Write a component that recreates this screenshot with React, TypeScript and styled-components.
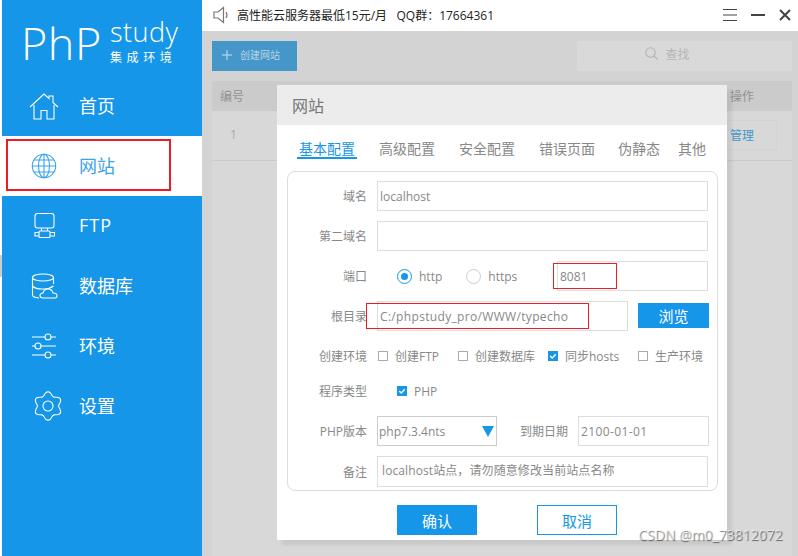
import * as React from 'react';
import styled, { createGlobalStyle } from 'styled-components';

const blue = '#1696e8';
const fontStack = `'Open Sans', 'Noto Sans CJK SC', sans-serif`;

const navItems = [
  { label: '首页', icon: 'home' },
  { label: '网站', icon: 'globe' },
  { label: 'FTP', icon: 'ftp' },
  { label: '数据库', icon: 'db' },
  { label: '环境', icon: 'env' },
  { label: '设置', icon: 'gear' },
];

const tabs = ['基本配置', '高级配置', '安全配置', '错误页面', '伪静态', '其他'];

function gearPath() {
  const pts: string[] = [];
  for (let i = 0; i < 72; i++) {
    const a = (i / 72) * Math.PI * 2;
    const r = 12.4 + 1.8 * Math.cos(6 * a);
    const x = 22 + r * Math.sin(a);
    const y = 18 - r * Math.cos(a);
    pts.push(`${x.toFixed(2)} ${y.toFixed(2)}`);
  }
  return `M${pts.join('L')}Z`;
}

function NavIcon({ name }: { name: string }) {
  return (
    <IconSvg viewBox="0 0 36 36" fill="none" stroke="currentColor" strokeWidth="1.1">
      {name === 'home' && (
        <>
          <path d="M4 19 L18 6 L23 10.5 V8 H27 V14.5 L32 19" />
          <path d="M8 17 V31 H15 V22.5 H21 V31 H28 V17" />
        </>
      )}
      {name === 'globe' && (
        <>
          <circle cx="18" cy="18" r="11.7" />
          <ellipse cx="18" cy="18" rx="5.5" ry="11.7" />
          <path d="M18 6.3 V29.7 M6.3 18 H29.7 M8 12 H28 M8 24 H28" />
        </>
      )}
      {name === 'ftp' && (
        <>
          <rect x="9" y="5.5" width="19" height="14.5" rx="2.5" />
          <path d="M15.5 20 V23 M21.5 20 V23" />
          <rect x="13" y="23" width="11" height="6.5" rx="1" />
          <path d="M13 24.5 H9 V28 H13 M24 24.5 H28.5 V28 H24" />
        </>
      )}
      {name === 'db' && (
        <>
          <ellipse cx="17" cy="9.5" rx="10.5" ry="3.5" />
          <path d="M6.5 9.5 V27 Q6.5 29.5 13 30 M27.5 9.5 V16 M6.5 18 Q10 21.5 18 21 Q24 20.8 27.5 18" />
          <path d="M17 30 Q14 30 14 27.5 Q14 25.2 17 25 Q18 21 22 21 Q26 21 27 25 Q31 25 31 27.8 Q31 30 29 30 Z" />
        </>
      )}
      {name === 'env' && (
        <>
          <path d="M6 9 H19 M25 9 H30 M6 18 H9 M15 18 H30 M6 27 H19 M25 27 H30" />
          <circle cx="22" cy="9" r="3" />
          <circle cx="12" cy="18" r="3" />
          <circle cx="22" cy="27" r="3" />
        </>
      )}
      {name === 'gear' && (
        <>
          <path d={gearPath()} />
          <circle cx="22" cy="18" r="5" />
        </>
      )}
    </IconSvg>
  );
}

function Check({ on }: { on?: boolean }) {
  return (
    <CheckBox $on={on}>
      {on && (
        <svg viewBox="0 0 10 10" width="10" height="10" fill="none" stroke="#fff" strokeWidth="1.4">
          <path d="M2.2 5 L4.2 7 L7.8 3.2" />
        </svg>
      )}
    </CheckBox>
  );
}

export default function App() {
  return (
    <Shell>
      <GlobalStyle />
      <Sidebar>
        <Logo>
          <LogoMark>PhP</LogoMark>
          <LogoSide>
            <LogoStudy>study</LogoStudy>
            <LogoSub>集成环境</LogoSub>
          </LogoSide>
        </Logo>
        {navItems.map((item) => (
          <NavItem key={item.label} $active={item.icon === 'globe'}>
            <NavIcon name={item.icon} />
            <NavLabel $latin={item.icon === 'ftp'}>{item.label}</NavLabel>
          </NavItem>
        ))}
      </Sidebar>

      <Main>
        <TopBar>
          <svg width="16" height="18" viewBox="0 0 16 18" fill="none" stroke="#777" strokeWidth="1.2">
            <path d="M1 6 H5 L10.5 1.5 V16.5 L5 12 H1 Z" />
            <path d="M13 6 Q15 9 13 12" />
          </svg>
          <Notice>高性能云服务器最低15元/月&nbsp;&nbsp;&nbsp;QQ群：17664361</Notice>
          <WindowControls>
            <svg width="14" height="12" viewBox="0 0 14 12" stroke="#444" strokeWidth="1">
              <path d="M0 .5 H14 M0 6 H14 M0 11.5 H14" />
            </svg>
            <svg width="14" height="12" viewBox="0 0 14 12" stroke="#444" strokeWidth="2">
              <path d="M0 6 H14" />
            </svg>
            <svg width="12" height="12" viewBox="0 0 12 12" stroke="#444" strokeWidth="2">
              <path d="M1 1 L11 11 M11 1 L1 11" />
            </svg>
          </WindowControls>
        </TopBar>

        <Content>
          <Toolbar>
            <CreateButton>
              <svg width="10" height="10" viewBox="0 0 10 10" stroke="#cfe0ec" strokeWidth="1">
                <path d="M5 0 V10 M0 5 H10" />
              </svg>
              创建网站
            </CreateButton>
            <SearchBox>
              <svg width="13" height="13" viewBox="0 0 13 13" fill="none" stroke="#b4b4b4" strokeWidth="1.1">
                <circle cx="5.5" cy="5.5" r="4.7" />
                <path d="M9 9 L12.5 12.5" />
              </svg>
              查找
            </SearchBox>
          </Toolbar>
          <Table>
            <TableHead>
              <span>编号</span>
              <ActionCell>操作</ActionCell>
            </TableHead>
            <TableRow>
              <RowIndex>1</RowIndex>
              <ManageButton>管理</ManageButton>
            </TableRow>
          </Table>

          <Modal>
            <ModalTitle>网站</ModalTitle>
            <TabBar>
              {tabs.map((t, i) => (
                <Tab key={t} $active={i === 0}>
                  {t}
                </Tab>
              ))}
            </TabBar>
            <Panel>
              <FormRow>
                <Label>域名</Label>
                <Field $grow>localhost</Field>
              </FormRow>
              <FormRow>
                <Label>第二域名</Label>
                <Field $grow />
              </FormRow>
              <FormRow>
                <Label>端口</Label>
                <RadioItem>
                  <Radio $on />
                  http
                </RadioItem>
                <RadioItem>
                  <Radio />
                  https
                </RadioItem>
                <Field $width={151} $push>
                  8081
                </Field>
              </FormRow>
              <FormRow>
                <Label>根目录</Label>
                <PathField $width={251}>C:/phpstudy_pro/WWW/typecho</PathField>
                <BrowseButton>浏览</BrowseButton>
              </FormRow>
              <FormRow>
                <Label>创建环境</Label>
                <CheckItem $width={80}>
                  <Check />
                  创建FTP
                </CheckItem>
                <CheckItem $width={90}>
                  <Check />
                  创建数据库
                </CheckItem>
                <CheckItem $width={90}>
                  <Check on />
                  同步hosts
                </CheckItem>
                <CheckItem $width={70}>
                  <Check />
                  生产环境
                </CheckItem>
              </FormRow>
              <TightRow>
                <Label>程序类型</Label>
                <PhpCheck>
                  <Check on />
                  PHP
                </PhpCheck>
              </TightRow>
              <FormRow>
                <Label>PHP版本</Label>
                <SelectBox>
                  php7.3.4nts
                  <SelectArrow />
                </SelectBox>
                <DateLabel>到期日期</DateLabel>
                <DateField $width={131}>2100-01-01</DateField>
              </FormRow>
              <NoteRow>
                <Label>备注</Label>
                <NoteField>localhost站点，请勿随意修改当前站点名称</NoteField>
              </NoteRow>
            </Panel>
            <ModalFooter>
              <ConfirmButton>确认</ConfirmButton>
              <CancelButton>取消</CancelButton>
            </ModalFooter>
          </Modal>
        </Content>
      </Main>

      <Annotation $left={6} $top={139} $w={165} $h={52} $thick />
      <Annotation $left={553} $top={263} $w={64} $h={26} />
      <Annotation $left={366} $top={303} $w={223} $h={26} />
      <Watermark>CSDN @m0_73812072</Watermark>
    </Shell>
  );
}

const GlobalStyle = createGlobalStyle`
  html, body {
    margin: 0;
    width: 798px;
    height: 556px;
    overflow: hidden;
    background: #fff;
    font-family: ${fontStack};
  }
  * {
    box-sizing: border-box;
  }
`;

const Shell = styled.div`
  position: relative;
  display: flex;
  width: 798px;
  height: 556px;
  padding-left: 2px;
  &::before {
    content: '';
    position: absolute;
    left: 0;
    top: 255px;
    width: 2px;
    height: 22px;
    background: #ccc;
  }
`;

const Sidebar = styled.aside`
  width: 200px;
  flex: none;
  background: ${blue};
`;

const Logo = styled.div`
  display: flex;
  height: 76px;
  padding: 12px 0 0 19px;
  color: #fff;
`;

const LogoMark = styled.div`
  width: 89px;
  font-size: 45px;
  font-weight: 300;
  line-height: 62px;
  letter-spacing: 0.5px;
`;

const LogoSide = styled.div`
  display: flex;
  flex-direction: column;
  padding-top: 2px;
`;

const LogoStudy = styled.div`
  font-size: 27px;
  font-weight: 300;
  line-height: 36px;
  letter-spacing: 0.5px;
`;

const LogoSub = styled.div`
  font-size: 12px;
  line-height: 16px;
  letter-spacing: 4.6px;
  white-space: nowrap;
`;

const NavItem = styled.div<{ $active?: boolean }>`
  display: flex;
  align-items: center;
  height: 60px;
  padding-left: 24px;
  gap: 17px;
  font-size: 18px;
  color: ${(p) => (p.$active ? '#3ba3ea' : '#fff')};
  background: ${(p) => (p.$active ? '#fff' : 'transparent')};
`;

const NavLabel = styled.span<{ $latin?: boolean }>`
  margin-top: -2px;
  letter-spacing: ${(p) => (p.$latin ? '1px' : '0')};
`;

const IconSvg = styled.svg`
  width: 36px;
  height: 36px;
  flex: none;
`;

const Main = styled.main`
  flex: 1;
  display: flex;
  flex-direction: column;
  min-width: 0;
`;

const TopBar = styled.header`
  display: flex;
  align-items: center;
  height: 31px;
  padding: 0 7px 1px 11px;
  background: #fff;
`;

const Notice = styled.div`
  margin-left: 8px;
  font-size: 12px;
  color: #222;
`;

const WindowControls = styled.div`
  display: flex;
  align-items: center;
  margin-left: auto;
  gap: 14px;
`;

const Content = styled.div`
  position: relative;
  flex: 1;
  display: flex;
  flex-direction: column;
  gap: 10px;
  padding: 10px 6px 0 10px;
  background: #d3d3d3;
`;

const Toolbar = styled.div`
  display: flex;
  justify-content: space-between;
  height: 30px;
`;

const CreateButton = styled.div`
  display: flex;
  align-items: center;
  gap: 8px;
  width: 85px;
  padding: 0 0 3px 10px;
  background: #4596c9;
  color: #bcd5e6;
  font-size: 10px;
`;

const SearchBox = styled.div`
  display: flex;
  align-items: center;
  justify-content: center;
  gap: 7px;
  width: 215px;
  padding: 0 34px 5px 0;
  background: #d9d9d9;
  color: #b5b5b5;
  font-size: 12px;
`;

const Table = styled.div`
  flex: 1;
  background: #d8d8d8;
`;

const TableHead = styled.div`
  display: flex;
  align-items: center;
  justify-content: space-between;
  height: 30px;
  padding-left: 8px;
  background: #cbcbcb;
  color: #929292;
  font-size: 12px;
`;

const ActionCell = styled.span`
  width: 62px;
`;

const TableRow = styled.div`
  display: flex;
  align-items: center;
  justify-content: space-between;
  height: 50px;
  padding: 0 15px 2px 18px;
  border-bottom: 1px solid #cacaca;
`;

const RowIndex = styled.span`
  color: #a3acb3;
  font-size: 12px;
`;

const ManageButton = styled.div`
  display: flex;
  align-items: center;
  justify-content: center;
  width: 70px;
  height: 30px;
  border: 1px solid #c7d6e0;
  color: #4596c9;
  font-size: 12px;
`;

const Modal = styled.section`
  position: absolute;
  left: 75px;
  top: 54px;
  display: flex;
  flex-direction: column;
  width: 450px;
  height: 455px;
  background: #fff;
  box-shadow: 5px 5px 3px rgba(0, 0, 0, 0.07);
`;

const ModalTitle = styled.div`
  height: 40px;
  padding-left: 15px;
  background: #ececec;
  color: #777;
  font-size: 16px;
  line-height: 42px;
`;

const TabBar = styled.div`
  display: flex;
  align-items: flex-start;
  gap: 20px;
  height: 46px;
  padding: 13px 0 0 20px;
`;

const Tab = styled.div<{ $active?: boolean }>`
  height: 21px;
  padding: 0 2px;
  font-size: 14px;
  line-height: 21px;
  color: ${(p) => (p.$active ? blue : '#888')};
  border-bottom: 2px solid ${(p) => (p.$active ? blue : 'transparent')};
  &:nth-child(5) {
    margin-left: -1px;
  }
  &:last-child {
    margin-left: -6px;
  }
`;

const Panel = styled.div`
  display: flex;
  flex-direction: column;
  gap: 10px;
  height: 320px;
  margin: 0 9px 0 10px;
  padding: 9px 9px 0 0;
  border: 1px solid #ddd;
  border-radius: 8px;
`;

const FormRow = styled.div`
  display: flex;
  align-items: center;
  height: 30px;
`;

const TightRow = styled(FormRow)`
  margin-top: -5px;
`;

const NoteRow = styled(FormRow)`
  height: 31px;
`;

const Label = styled.div`
  flex: none;
  width: 79px;
  margin-right: 10px;
  text-align: right;
  color: #888;
  font-size: 12px;
`;

const Field = styled.div<{ $grow?: boolean; $width?: number; $push?: boolean }>`
  display: flex;
  align-items: center;
  ${(p) => (p.$grow ? 'flex: 1;' : '')}
  ${(p) => (p.$width ? `width: ${p.$width}px; flex: none;` : '')}
  ${(p) => (p.$push ? 'margin-left: auto;' : '')}
  height: 30px;
  padding-left: 2px;
  border: 1px solid #ddd;
  color: #888;
  font-size: 12px;
  white-space: nowrap;
`;

const PathField = styled(Field)`
  letter-spacing: 0.33px;
`;

const DateField = styled(Field)`
  letter-spacing: 0.4px;
`;

const NoteField = styled(Field)`
  flex: 1;
  height: 31px;
  padding: 0 0 3px 4px;
  letter-spacing: 0.1px;
`;

const RadioItem = styled.div`
  display: flex;
  align-items: center;
  gap: 7px;
  margin-left: 20px;
  color: #888;
  font-size: 12px;
  & + & {
    margin-left: 24px;
  }
`;

const Radio = styled.span<{ $on?: boolean }>`
  display: flex;
  align-items: center;
  justify-content: center;
  width: 15px;
  height: 15px;
  border-radius: 50%;
  border: 1px solid ${(p) => (p.$on ? blue : '#ccc')};
  &::after {
    content: '';
    display: ${(p) => (p.$on ? 'block' : 'none')};
    width: 7px;
    height: 7px;
    border-radius: 50%;
    background: ${blue};
  }
`;

const BrowseButton = styled.div`
  display: flex;
  align-items: center;
  justify-content: center;
  flex: none;
  width: 71px;
  height: 25px;
  margin: 0 0 1px 10px;
  background: ${blue};
  color: #fff;
  font-size: 15px;
`;

const CheckItem = styled.div<{ $width: number }>`
  display: flex;
  align-items: center;
  flex: none;
  gap: 7px;
  width: ${(p) => p.$width}px;
  padding-left: 1px;
  color: #888;
  font-size: 12px;
  white-space: nowrap;
`;

const PhpCheck = styled(CheckItem).attrs({ $width: 60 })`
  margin-left: 19px;
`;

const CheckBox = styled.span<{ $on?: boolean }>`
  display: block;
  flex: none;
  width: 10px;
  height: 10px;
  border: ${(p) => (p.$on ? 'none' : '1px solid #aaa')};
  background: ${(p) => (p.$on ? blue : 'transparent')};
  svg {
    display: block;
  }
`;

const SelectBox = styled.div`
  position: relative;
  display: flex;
  align-items: center;
  flex: none;
  width: 120px;
  height: 30px;
  padding-left: 1px;
  border: 1px solid #ccc;
  color: #888;
  font-size: 12px;
`;

const SelectArrow = styled.span`
  position: absolute;
  right: 2px;
  top: 9px;
  border-left: 6px solid transparent;
  border-right: 6px solid transparent;
  border-top: 11px solid ${blue};
`;

const DateLabel = styled.div`
  flex: none;
  width: 71px;
  margin-right: 10px;
  text-align: right;
  color: #888;
  font-size: 12px;
`;

const ModalFooter = styled.div`
  display: flex;
  justify-content: center;
  gap: 60px;
  padding: 14px 0 0 10px;
`;

const ConfirmButton = styled.div`
  display: flex;
  align-items: center;
  justify-content: center;
  width: 80px;
  height: 30px;
  background: ${blue};
  color: #fff;
  font-size: 15px;
`;

const CancelButton = styled(ConfirmButton)`
  border: 1px solid ${blue};
  background: #fff;
  color: ${blue};
`;

const Annotation = styled.div<{ $left: number; $top: number; $w: number; $h: number; $thick?: boolean }>`
  position: absolute;
  left: ${(p) => p.$left}px;
  top: ${(p) => p.$top}px;
  width: ${(p) => p.$w}px;
  height: ${(p) => p.$h}px;
  border: ${(p) => (p.$thick ? 2 : 1)}px solid #ed1c24;
`;

const Watermark = styled.div`
  position: absolute;
  left: 638px;
  top: 525px;
  color: rgba(255, 255, 255, 0.55);
  font-size: 14px;
  white-space: nowrap;
  text-shadow: 1px 1px 1px rgba(0, 0, 0, 0.55);
`;
